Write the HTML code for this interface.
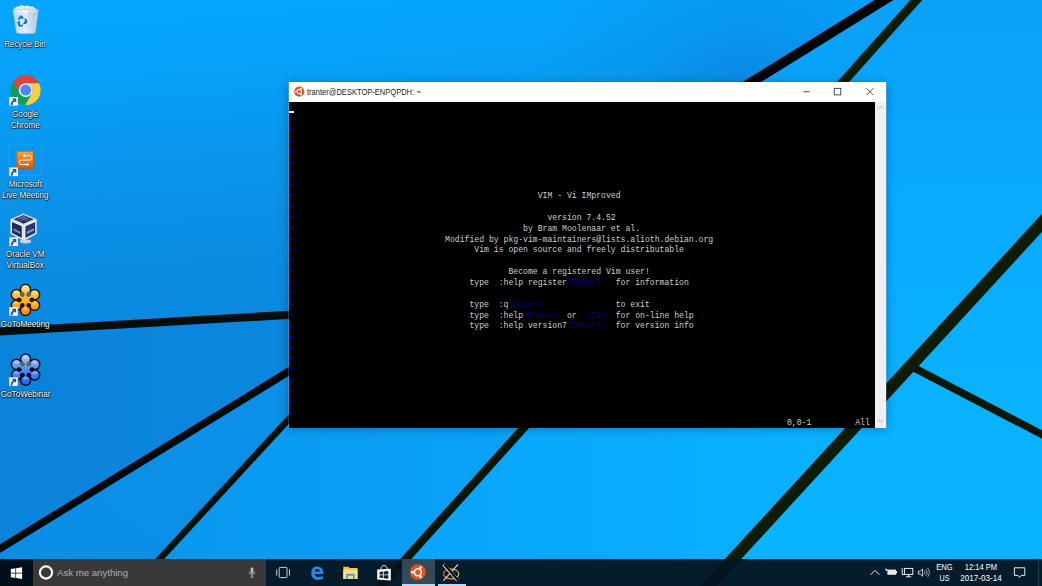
<!DOCTYPE html>
<html><head><meta charset="utf-8">
<title>Desktop</title>
<style>
html,body{margin:0;padding:0;}
body{width:1042px;height:586px;overflow:hidden;position:relative;background:#0a9cf0;font-family:"Liberation Sans",sans-serif;}
#wall{position:absolute;left:0;top:0;width:1042px;height:586px;}
.ico{position:absolute;width:60px;text-align:center;color:#fff;font-size:8.2px;line-height:10.4px;text-shadow:0 0 1px #000,0.5px 0.7px 1px rgba(0,0,0,.9),0 0 2px rgba(0,0,0,.6);white-space:nowrap;}
.ico span{display:block;}
.sc{position:absolute;width:8.5px;height:8.5px;background:#f4f6fa;}
#win{position:absolute;left:288px;top:82px;width:598.5px;height:345.5px;background:rgba(90,170,235,.3);box-shadow:0 1px 9px rgba(0,0,0,.28);}
#title{position:absolute;left:0.7px;top:0;width:597.3px;height:20px;background:#fff;}
#title .t{position:absolute;left:18.800px;top:5px;font-size:8.3px;line-height:11px;color:#1c1c1c;white-space:nowrap;transform-origin:0 50%;transform:scaleX(.908);}
#term{position:absolute;left:1px;top:20px;width:586px;height:325.5px;background:#000;overflow:hidden;}
#sb{position:absolute;left:587px;top:20px;width:11px;height:325.5px;background:#f0f0f0;}
pre{margin:0;position:absolute;left:0;top:2.3px;font-family:"Liberation Mono",monospace;font-size:8.14px;line-height:10.854px;color:#cecece;white-space:pre;}
.b{color:#0000ee;position:relative;top:.3px;}
.r{position:relative;top:-1.3px;left:.6px;}
.d{color:#000088;}
#tb{position:absolute;left:0;top:559px;width:1042px;height:27px;background:rgba(4,20,33,.95);}

#tb .start{position:absolute;left:0;top:0;width:32.5px;height:27px;background:rgba(2,8,16,.6);}
#tb .search{position:absolute;left:32.5px;top:0;width:233px;height:27px;background:#39393b;}
#tb .search .q{position:absolute;left:24.6px;top:8.2px;font-size:9.6px;line-height:12px;color:#adadad;white-space:nowrap;}
#tb svg{position:absolute;left:0;top:0;}
#tb .act{position:absolute;left:401.5px;top:0;width:33.2px;height:27px;background:rgba(168,182,190,.3);}
#tb .ul{position:absolute;top:25px;height:2px;background:#b2dbf7;}
.tray{position:absolute;color:#fff;font-size:8.2px;line-height:10px;white-space:nowrap;text-align:center;}
</style></head>
<body>
<svg id="wall" viewBox="0 0 1042 586">
<defs>
<linearGradient id="gA" gradientUnits="userSpaceOnUse" x1="0" y1="0" x2="25" y2="331"><stop offset="0" stop-color="#03a7fe"/><stop offset="0.25" stop-color="#06a1f8"/><stop offset="0.5" stop-color="#0a96ec"/><stop offset="0.75" stop-color="#0b8ee5"/><stop offset="1" stop-color="#0b89e0"/></linearGradient>
<radialGradient id="gA2" gradientUnits="userSpaceOnUse" cx="745" cy="100" r="210"><stop offset="0" stop-color="#0c78d8" stop-opacity=".55"/><stop offset="0.5" stop-color="#0c80dc" stop-opacity=".22"/><stop offset="1" stop-color="#0c80dc" stop-opacity="0"/></radialGradient>
<linearGradient id="gB" x1="0" y1="0" x2="1" y2="0"><stop offset="0" stop-color="#0a84da"/><stop offset="1" stop-color="#0b8ae0"/></linearGradient>
<linearGradient id="gC" x1="0" y1="1" x2="1" y2="0"><stop offset="0" stop-color="#0b8ee6"/><stop offset="1" stop-color="#0b90e8"/></linearGradient>
<linearGradient id="gD" gradientUnits="userSpaceOnUse" x1="160" y1="0" x2="520" y2="0"><stop offset="0" stop-color="#0a98f0"/><stop offset="1" stop-color="#0aa2f8"/></linearGradient>
<linearGradient id="gD2" gradientUnits="userSpaceOnUse" x1="400" y1="0" x2="850" y2="0"><stop offset="0" stop-color="#09a5fb"/><stop offset="1" stop-color="#0ab2ff"/></linearGradient>
<linearGradient id="gR" gradientUnits="userSpaceOnUse" x1="0" y1="0" x2="0" y2="586"><stop offset="0" stop-color="#0aa1f7"/><stop offset="0.3" stop-color="#0aa9fd"/><stop offset="0.6" stop-color="#0ab0ff"/><stop offset="1" stop-color="#09b6ff"/></linearGradient>
</defs>
<rect width="1042" height="586" fill="url(#gR)"/>
<polygon fill="url(#gA)" points="0,0 884,0 600,180 600,297 0,331"/>
<polygon fill="url(#gA2)" points="0,0 884,0 600,180 600,297 0,331"/>
<polygon fill="#0aa2f8" points="881,0 916,0 740,200 600,180"/>
<polygon fill="url(#gB)" points="0,330 600,297 450,273 0,545"/>
<polygon fill="url(#gC)" points="0,545 450,273 400,301 133,590 0,590"/>
<polygon fill="url(#gD)" points="133,590 400,301 640,301 378,590"/>
<polygon fill="url(#gD2)" points="378,590 640,301 900,380 705,590"/>
<polygon fill="url(#gR)" points="705,590 917,368 1042,438 1042,590"/>
<polygon fill="url(#gR)" points="917,368 1042,219 1042,438"/>
<polygon fill="#060e0a" points="-14.2,336.4 461.0,309.0 460.6,300.9 -14.6,328.3"/>
<polygon fill="#04090c" points="-12.5,560.7 434.4,286.4 430.5,280.0 -16.4,554.4"/>
<polygon fill="#06110a" points="122.4,604.4 394.6,309.3 389.8,304.9 117.6,599.9"/>
<polygon fill="#020508" points="894.4,-12.3 620.4,157.8 625.6,166.2 899.7,-3.9"/>
<polygon fill="#0d1c05" points="920.2,-11.1 768.4,159.0 775.0,165.0 926.8,-5.1"/>
<polygon fill="#0b1705" points="911.8,370.9 1050.2,442.9 1053.7,436.3 915.3,364.2"/>
<polygon fill="#0a1604" points="590.8,347.1 368.3,594.5 374.5,600.0 596.9,352.7"/>
<polygon fill="#0e1c05" points="1056.4,198.1 691.6,595.3 700.4,603.4 1065.4,206.4"/>
</svg>
<!--ICONS-->
<svg id="icons" width="60" height="410" viewBox="0 0 60 410" style="position:absolute;left:0;top:0">
<g>
<defs><linearGradient id="rb" x1="0" y1="0" x2="1" y2="0"><stop offset="0" stop-color="#d3dde8"/><stop offset="0.45" stop-color="#f3f6f9"/><stop offset="1" stop-color="#c2d0de"/></linearGradient></defs>
<path d="M14.200 8.600c2-2.400 4.400-1.800 5.600-2.800 1.800-1.200 3.600-.4 4.800.4 1.600-1.200 3.800-1 5 .2 2.400-.6 4.600.6 6.600 2.600l-2 3.200h-17.600z" fill="#eef0f3"/>
<path d="M20.600 6.400l2.200 2.600M25.800 6.600l-1.200 2.400M30.400 7l-1.600 2.200M17.400 7.800l1.800 1.400M33.600 8l-1.400 1.400" stroke="#b9c3cd" stroke-width="0.700" fill="none"/>
<path d="M12.900 9.400h25.400l-2.900 23.400c-3.200 1.200-15.600 1.200-18.800 0z" fill="url(#rb)" opacity=".92"/>
<path d="M29 11l4.500 3-1.500 5 2.500 4-2 6.500M30.500 12.500l-2 5.500 2.500 4.500-1.500 6M34.500 13l-1 7" stroke="#b4c0cc" stroke-width="0.600" fill="none" opacity=".8"/>
<path d="M15.500 12l1.500 5-.8 6 1.300 7" stroke="#c2ccd6" stroke-width="0.600" fill="none" opacity=".8"/>
<path d="M12.900 9.400h25.400l-2.900 23.400c-3.200 1.200-15.600 1.200-18.800 0z" fill="none" stroke="#9dbcd8" stroke-width="0.600" opacity=".9"/>
<path d="M16.600 32.800c3.200 1.200 15.600 1.200 18.800 0" fill="none" stroke="#c4b2a0" stroke-width="0.800"/>
<g fill="none" stroke="#1c6fd0" stroke-width="1.900"><path d="M18.600 19.600l1.900-3.100 2.100 1.200"/><path d="M25 18.600l1.600 3.100-1.900 1.300"/><path d="M22.900 25.600h-3.500l-.8-2.200"/></g>
<g fill="#1c6fd0"><path d="M21.800 14.900l2.200 3.500-3.700.3z"/><path d="M26.700 23.700l-3.800.8 1.300-3.400z"/><path d="M16.700 23.200l2.400-2.900 1.600 3.500z"/></g>
</g>
<path d="M25.70 83.20L39.02 83.20A15.00 15.00 0 0 0 13.07 82.02L19.72 93.55A6.90 6.90 0 0 1 25.70 83.20Z" fill="#db4437"/>
<path d="M31.68 93.55L25.02 105.08A15.00 15.00 0 0 0 39.02 83.20L25.70 83.20A6.90 6.90 0 0 1 31.68 93.55Z" fill="#ffcd40"/>
<path d="M19.72 93.55L13.07 82.02A15.00 15.00 0 0 0 25.02 105.08L31.68 93.55A6.90 6.90 0 0 1 19.72 93.55Z" fill="#0f9d58"/>
<circle cx="25.70" cy="90.10" r="6.90" fill="#f4f4f4"/>
<circle cx="25.70" cy="90.10" r="5.50" fill="#4a8af4"/>
<rect x="9.30" y="97.00" width="8.60" height="8.60" fill="#f2f5fa"/><path d="M12.00 98.50h4.200v4.200l-1.400-1.400c-1.600 1.100-2.300 2.300-2.300 3.900h-1.800c0-2.300 1-3.900 2.700-5.300z" fill="#204fa6"/>
<g>
<defs><linearGradient id="lm" x1="0" y1="0" x2="0" y2="1"><stop offset="0" stop-color="#f7a24a"/><stop offset="0.5" stop-color="#ee7d16"/><stop offset="1" stop-color="#d9600a"/></linearGradient></defs>
<rect x="8.800" y="144.100" width="32.700" height="31.600" fill="none" stroke="#fff" stroke-width="0.500" opacity=".16"/>
<rect x="16.600" y="151.100" width="17.500" height="17.500" rx="1.800" fill="url(#lm)"/>
<rect x="16.900" y="151.400" width="16.900" height="16.900" rx="1.600" fill="none" stroke="#c2560a" stroke-width="0.600"/>
<path d="M23.300 155.700h6.300a2.200 2.200 0 0 1 0 4.400h-8.100a2.200 2.200 0 0 0 0 4.400h7" fill="none" stroke="#fff" stroke-width="1" opacity=".95"/>
<path d="M25.200 153.900l-2.300 1.800 2.300 1.800zM26.700 162.700l2.300 1.800-2.300 1.800z" fill="#fff" stroke="none"/>
<path d="M33.600 152v16.100h-16.500" fill="none" stroke="#b54a06" stroke-width="1" opacity=".55"/>
</g>
<rect x="9.40" y="167.50" width="8.60" height="8.60" fill="#f2f5fa"/><path d="M12.10 169.00h4.200v4.200l-1.400-1.400c-1.600 1.100-2.300 2.300-2.300 3.900h-1.800c0-2.300 1-3.900 2.700-5.300z" fill="#204fa6"/>
<g>
<ellipse cx="25.600" cy="241.800" rx="6" ry="2" fill="#9ea9b8"/>
<ellipse cx="25.600" cy="241.100" rx="5.400" ry="1.600" fill="#d4dae4"/>
<path d="M23.600 213.700l13 5.600v14.400l-13 7-13-7v-14.400z" fill="#eef1f6"/>
<path d="M23.600 213.700l13 5.600v14.400l-13 7-13-7v-14.400z" fill="none" stroke="#aeb9ca" stroke-width="0.600"/>
<path d="M23.600 224.900v15.600M10.800 219.400l12.800 5.500 12.800-5.500" fill="none" stroke="#c6cedb" stroke-width="0.700"/>
<path d="M23.600 214.900l10.200 4.400-10.200 4.500-10.200-4.500z" fill="#1d2f5c"/>
<path d="M12 221.900l9.800 4.400v11.800l-9.800-5.200z" fill="#1b2c57"/>
<path d="M35.200 221.900l-9.800 4.400v11.800l9.800-5.200z" fill="#243a6e"/>
<path d="M18.500 217.100l10.200 4.400M28.700 217.100l-10.200 4.400M21 216l10.200 4.400M26.200 216l-10.200 4.400" stroke="#a9b8d6" stroke-width="0.500" fill="none" opacity=".85"/>
<path d="M13.400 228.300l7 3.400v2.300l-7-3.400z" fill="#8fa1c4" opacity=".8"/>
<path d="M33.800 228.300l-7 3.400v2.300l7-3.400z" fill="#a6b7d6" opacity=".8"/>
</g>
<rect x="9.40" y="237.40" width="8.60" height="8.60" fill="#f2f5fa"/><path d="M12.10 238.90h4.200v4.200l-1.400-1.400c-1.600 1.100-2.300 2.300-2.300 3.900h-1.800c0-2.300 1-3.900 2.700-5.300z" fill="#204fa6"/>
<defs><linearGradient id="fm" x1="0" y1="0" x2="0" y2="1"><stop offset="0" stop-color="#ffe27a"/><stop offset="0.55" stop-color="#ffb21e"/><stop offset="1" stop-color="#ff8a0e"/></linearGradient></defs>
<g fill="#241608"><circle cx="25.50" cy="289.40" r="5.80"/><path d="M25.50 299.90L25.50 289.40" stroke="#241608" stroke-width="5.4" stroke-linecap="round"/><circle cx="34.59" cy="294.65" r="5.80"/><path d="M25.50 299.90L34.59 294.65" stroke="#241608" stroke-width="5.4" stroke-linecap="round"/><circle cx="34.59" cy="305.15" r="5.80"/><path d="M25.50 299.90L34.59 305.15" stroke="#241608" stroke-width="5.4" stroke-linecap="round"/><circle cx="25.50" cy="310.40" r="5.80"/><path d="M25.50 299.90L25.50 310.40" stroke="#241608" stroke-width="5.4" stroke-linecap="round"/><circle cx="16.41" cy="305.15" r="5.80"/><path d="M25.50 299.90L16.41 305.15" stroke="#241608" stroke-width="5.4" stroke-linecap="round"/><circle cx="16.41" cy="294.65" r="5.80"/><path d="M25.50 299.90L16.41 294.65" stroke="#241608" stroke-width="5.4" stroke-linecap="round"/><circle cx="25.50" cy="299.90" r="5.6"/></g>
<defs><linearGradient id="fmu" gradientUnits="userSpaceOnUse" x1="0" y1="284.9" x2="0" y2="314.9"><stop offset="0" stop-color="#ffe27a"/><stop offset="0.5" stop-color="#ffb21e"/><stop offset="1" stop-color="#ff8a0e"/></linearGradient></defs>
<g fill="url(#fmu)"><circle cx="25.50" cy="289.40" r="4.30"/><path d="M25.50 299.90L25.50 289.40" stroke="url(#fmu)" stroke-width="2.6" stroke-linecap="round"/><circle cx="34.59" cy="294.65" r="4.30"/><path d="M25.50 299.90L34.59 294.65" stroke="url(#fmu)" stroke-width="2.6" stroke-linecap="round"/><circle cx="34.59" cy="305.15" r="4.30"/><path d="M25.50 299.90L34.59 305.15" stroke="url(#fmu)" stroke-width="2.6" stroke-linecap="round"/><circle cx="25.50" cy="310.40" r="4.30"/><path d="M25.50 299.90L25.50 310.40" stroke="url(#fmu)" stroke-width="2.6" stroke-linecap="round"/><circle cx="16.41" cy="305.15" r="4.30"/><path d="M25.50 299.90L16.41 305.15" stroke="url(#fmu)" stroke-width="2.6" stroke-linecap="round"/><circle cx="16.41" cy="294.65" r="4.30"/><path d="M25.50 299.90L16.41 294.65" stroke="url(#fmu)" stroke-width="2.6" stroke-linecap="round"/><circle cx="25.50" cy="299.90" r="4.0"/></g>
<circle cx="22.25" cy="294.27" r="2.4" fill="#6a6a6a" opacity=".9"/>
<circle cx="28.75" cy="294.27" r="2.4" fill="#6a6a6a" opacity=".9"/>
<circle cx="22.25" cy="305.53" r="2.3" fill="#241608"/>
<circle cx="28.75" cy="305.53" r="2.3" fill="#241608"/>
<circle cx="32.00" cy="299.90" r="2.3" fill="#241608"/>
<circle cx="19.00" cy="299.90" r="2.3" fill="#241608"/>
<ellipse cx="25.50" cy="287.40" rx="2.8" ry="1.6" fill="#fff" opacity=".28"/>
<ellipse cx="34.59" cy="292.65" rx="2.8" ry="1.6" fill="#fff" opacity=".28"/>
<ellipse cx="34.59" cy="303.15" rx="2.8" ry="1.6" fill="#fff" opacity=".28"/>
<ellipse cx="25.50" cy="308.40" rx="2.8" ry="1.6" fill="#fff" opacity=".28"/>
<ellipse cx="16.41" cy="303.15" rx="2.8" ry="1.6" fill="#fff" opacity=".28"/>
<ellipse cx="16.41" cy="292.65" rx="2.8" ry="1.6" fill="#fff" opacity=".28"/>
<rect x="9.20" y="307.20" width="8.60" height="8.60" fill="#f2f5fa"/><path d="M11.90 308.70h4.200v4.200l-1.400-1.400c-1.600 1.100-2.300 2.300-2.300 3.900h-1.800c0-2.300 1-3.900 2.700-5.300z" fill="#204fa6"/>
<defs><linearGradient id="fw" x1="0" y1="0" x2="0" y2="1"><stop offset="0" stop-color="#a9ccff"/><stop offset="0.55" stop-color="#4d8dff"/><stop offset="1" stop-color="#1f63f2"/></linearGradient></defs>
<g fill="#0a0e1a"><circle cx="25.60" cy="359.10" r="5.80"/><path d="M25.60 369.60L25.60 359.10" stroke="#0a0e1a" stroke-width="5.4" stroke-linecap="round"/><circle cx="34.69" cy="364.35" r="5.80"/><path d="M25.60 369.60L34.69 364.35" stroke="#0a0e1a" stroke-width="5.4" stroke-linecap="round"/><circle cx="34.69" cy="374.85" r="5.80"/><path d="M25.60 369.60L34.69 374.85" stroke="#0a0e1a" stroke-width="5.4" stroke-linecap="round"/><circle cx="25.60" cy="380.10" r="5.80"/><path d="M25.60 369.60L25.60 380.10" stroke="#0a0e1a" stroke-width="5.4" stroke-linecap="round"/><circle cx="16.51" cy="374.85" r="5.80"/><path d="M25.60 369.60L16.51 374.85" stroke="#0a0e1a" stroke-width="5.4" stroke-linecap="round"/><circle cx="16.51" cy="364.35" r="5.80"/><path d="M25.60 369.60L16.51 364.35" stroke="#0a0e1a" stroke-width="5.4" stroke-linecap="round"/><circle cx="25.60" cy="369.60" r="5.6"/></g>
<defs><linearGradient id="fwu" gradientUnits="userSpaceOnUse" x1="0" y1="354.6" x2="0" y2="384.6"><stop offset="0" stop-color="#a9ccff"/><stop offset="0.5" stop-color="#4d8dff"/><stop offset="1" stop-color="#1f63f2"/></linearGradient></defs>
<g fill="url(#fwu)"><circle cx="25.60" cy="359.10" r="4.30"/><path d="M25.60 369.60L25.60 359.10" stroke="url(#fwu)" stroke-width="2.6" stroke-linecap="round"/><circle cx="34.69" cy="364.35" r="4.30"/><path d="M25.60 369.60L34.69 364.35" stroke="url(#fwu)" stroke-width="2.6" stroke-linecap="round"/><circle cx="34.69" cy="374.85" r="4.30"/><path d="M25.60 369.60L34.69 374.85" stroke="url(#fwu)" stroke-width="2.6" stroke-linecap="round"/><circle cx="25.60" cy="380.10" r="4.30"/><path d="M25.60 369.60L25.60 380.10" stroke="url(#fwu)" stroke-width="2.6" stroke-linecap="round"/><circle cx="16.51" cy="374.85" r="4.30"/><path d="M25.60 369.60L16.51 374.85" stroke="url(#fwu)" stroke-width="2.6" stroke-linecap="round"/><circle cx="16.51" cy="364.35" r="4.30"/><path d="M25.60 369.60L16.51 364.35" stroke="url(#fwu)" stroke-width="2.6" stroke-linecap="round"/><circle cx="25.60" cy="369.60" r="4.0"/></g>
<circle cx="22.35" cy="363.97" r="2.4" fill="#6a6a6a" opacity=".9"/>
<circle cx="28.85" cy="363.97" r="2.4" fill="#6a6a6a" opacity=".9"/>
<circle cx="22.35" cy="375.23" r="2.3" fill="#0a0e1a"/>
<circle cx="28.85" cy="375.23" r="2.3" fill="#0a0e1a"/>
<circle cx="32.10" cy="369.60" r="2.3" fill="#0a0e1a"/>
<circle cx="19.10" cy="369.60" r="2.3" fill="#0a0e1a"/>
<ellipse cx="25.60" cy="357.10" rx="2.8" ry="1.6" fill="#fff" opacity=".28"/>
<ellipse cx="34.69" cy="362.35" rx="2.8" ry="1.6" fill="#fff" opacity=".28"/>
<ellipse cx="34.69" cy="372.85" rx="2.8" ry="1.6" fill="#fff" opacity=".28"/>
<ellipse cx="25.60" cy="378.10" rx="2.8" ry="1.6" fill="#fff" opacity=".28"/>
<ellipse cx="16.51" cy="372.85" rx="2.8" ry="1.6" fill="#fff" opacity=".28"/>
<ellipse cx="16.51" cy="362.35" rx="2.8" ry="1.6" fill="#fff" opacity=".28"/>
<rect x="9.20" y="377.30" width="8.60" height="8.60" fill="#f2f5fa"/><path d="M11.90 378.80h4.200v4.200l-1.400-1.400c-1.600 1.100-2.300 2.300-2.300 3.900h-1.800c0-2.300 1-3.900 2.700-5.300z" fill="#204fa6"/>
</svg>
<div class="ico" style="left:-4.7px;top:39.8px;transform:scaleX(0.95)"><span>Recycle Bin</span></div>
<div class="ico" style="left:-4.8px;top:110.3px;transform:scaleX(1.0)"><span>Google</span><span>Chrome</span></div>
<div class="ico" style="left:-4.7px;top:180.4px;transform:scaleX(1.0)"><span>Microsoft</span><span>Live Meeting</span></div>
<div class="ico" style="left:-4.8px;top:250.4px;transform:scaleX(1.0)"><span>Oracle VM</span><span>VirtualBox</span></div>
<div class="ico" style="left:-4.8px;top:319.5px;transform:scaleX(1.0)"><span>GoToMeeting</span></div>
<div class="ico" style="left:-4.4px;top:389.9px;transform:scaleX(1.0)"><span>GoToWebinar</span></div>
<!--/ICONS-->
<div id="win">
 <div id="title">
  <svg width="598" height="20" viewBox="0 0 598 20" style="position:absolute;left:0;top:0">
   <circle cx="10.3" cy="9.6" r="5.1" fill="#e2521e"/>
   <circle cx="10.3" cy="9.6" r="2.2" fill="none" stroke="#fff" stroke-width="1.1"/>
   <circle cx="6.9" cy="9.6" r="0.9" fill="#fff"/><circle cx="12" cy="6.7" r="0.9" fill="#fff"/><circle cx="12" cy="12.5" r="0.9" fill="#fff"/>
   <path d="M514.4 9.700h6.300" stroke="#222" stroke-width="0.8" fill="none"/>
   <rect x="545.2" y="6.300" width="6.600" height="6.600" fill="none" stroke="#222" stroke-width="0.8"/>
   <path d="M577.5 6.300l6.800 6.800M584.300 6.300l-6.800 6.800" stroke="#222" stroke-width="0.8" fill="none"/>
  </svg>
  <div class="t">tranter@DESKTOP-ENPQPDH: ~</div>
 </div>
 <div id="term"><div style="position:absolute;left:0;top:8.7px;width:4.900px;height:2.200px;background:#f2f2f2"></div><pre id="scr">

<span class="b">~</span>
<span class="b">~</span>
<span class="b">~</span>
<span class="b">~</span>
<span class="b">~</span>
<span class="b">~</span>
<span class="b">~</span>
<span class="b">~</span>                                                  VIM - Vi IMproved
<span class="b">~</span>
<span class="b">~</span>                                                    version 7.4.52
<span class="b">~</span>                                               by Bram Moolenaar et al.
<span class="b">~</span>                               Modified by pkg-vim-maintainers@lists.alioth.debian.org
<span class="b">~</span>                                     Vim is open source and freely distributable
<span class="b">~</span>
<span class="b">~</span>                                            Become a registered Vim user!
<span class="b">~</span>                                    type  :help register<span class="d">&lt;Enter&gt;</span>   for information
<span class="b">~</span>
<span class="b">~</span>                                    type  :q<span class="d">&lt;Enter&gt;</span>               to exit
<span class="b">~</span>                                    type  :help<span class="d">&lt;Enter&gt;</span>  or  <span class="d">&lt;F1&gt;</span>  for on-line help
<span class="b">~</span>                                    type  :help version7<span class="d">&lt;Enter&gt;</span>   for version info
<span class="b">~</span>
<span class="b">~</span>
<span class="b">~</span>
<span class="b">~</span>
<span class="b">~</span>
<span class="b">~</span>
<span class="b">~</span>
<span class="b">~</span>
                                                                                                      <span class="r">0,0-1         All</span></pre></div>
 <div id="sb"><svg width="11" height="325" viewBox="-1 0 11 325" style="position:absolute;left:0;top:0">
  <path d="M2 6.6l2.6-2.6 2.6 2.6" stroke="#9a9a9a" stroke-width="0.8" fill="none"/>
  <path d="M2 317.6l2.6 2.6 2.6-2.6" stroke="#9a9a9a" stroke-width="0.8" fill="none"/>
 </svg></div>
</div>
<div id="tb">
 <div class="start"></div>
 <div class="search"><div class="q">Ask me anything</div></div>
 <div class="act"></div>
 <div class="ul" style="left:401.5px;width:33.2px"></div>
 <div class="ul" style="left:438px;width:27.800px"></div>
 <svg width="1042" height="27" viewBox="0 0 1042 27">
  <!-- start logo -->
  <g fill="#fff"><path d="M10.8 9.9l4.6-.65v4.5h-4.6zM16.1 9.15l6-.85v5.45h-6zM10.8 14.45h4.6v4.5l-4.6-.65zM16.1 14.45h6v5.45l-6-.85z"/></g>
  <!-- cortana -->
  <circle cx="46" cy="13.500" r="6.100" fill="none" stroke="#fff" stroke-width="2.200"/>
  <!-- mic -->
  <g stroke="#bdbdbd" fill="none" stroke-width="0.8"><rect x="250.6" y="8.6" width="2.8" height="6" rx="1.4" fill="#bdbdbd" stroke="none"/><path d="M249.2 13c0 3.6 5.6 3.6 5.6 0M252 15.8v2.2M250.4 18.2h3.2"/></g>
  <!-- task view -->
  <g stroke="#e4e4e4" fill="none" stroke-width="0.9"><rect x="279.2" y="8.4" width="7.8" height="10.2" rx="1"/><path d="M276.700 10.300v6.400M289.500 10.300v6.400"/></g>
  <!-- edge -->
  <g><path d="M310.6 13.6c.3-3.6 3-6.2 6.5-6.2 3.9 0 6.1 2.8 6.1 6.3v1.3h-8.6c.2 2 1.8 3.1 4 3.1 1.6 0 3-.4 4.2-1.1v2.8c-1.3.7-2.9 1-4.7 1-4.2 0-6.9-2.6-6.9-6.4 0-2 .9-3.7 2.3-4.9-1.500 1-2.600 2.500-2.900 4.100zM314.700 12.600h5.100c0-1.600-1-2.600-2.500-2.600-1.400 0-2.400 1-2.600 2.600z" fill="#1e8fe6"/></g>
  <!-- explorer -->
  <g><path d="M343.300 7.800h5.200l1.100 1.300h7.900v10.900h-14.200z" fill="#f2c443"/><path d="M343.300 10.600h14.200v9.400h-14.200z" fill="#fbdf86"/><path d="M346.200 14.800h8.400v5.200h-8.400z" fill="#3a9ae4"/><path d="M347.800 16.700h5.200v3.300h-5.200z" fill="#fbdf86"/></g>
  <!-- store -->
  <g><path d="M377.200 10.600l13.600-.8v11.600l-13.600-.9z" fill="#fff"/><path d="M380.800 10.200c0-4.600 6.200-5 6.400-.2" fill="none" stroke="#fff" stroke-width="0.900"/><path d="M379.600 12.900l3.300-.4v2.900h-3.300zM383.700 12.400l4.600-.5v3.500h-4.600zM379.600 16.200h3.300v2.900l-3.300-.3zM383.700 16.200h4.600v3.500l-4.600-.5z" fill="#0b2233"/></g>
  <!-- ubuntu -->
  <g><circle cx="417.900" cy="13.200" r="7.900" fill="#e2521e"/><circle cx="417.900" cy="13.200" r="3.500" fill="none" stroke="#fff" stroke-width="1.600"/><circle cx="412.600" cy="13.200" r="1.400" fill="#fff"/><circle cx="420.550" cy="8.600" r="1.400" fill="#fff"/><circle cx="420.550" cy="17.800" r="1.400" fill="#fff"/></g>
  <!-- xming -->
  <defs><linearGradient id="xg" x1="0" y1="0" x2="1" y2="0"><stop offset="0" stop-color="#f4561a"/><stop offset="0.5" stop-color="#e88a28"/><stop offset="1" stop-color="#d2a83c"/></linearGradient></defs>
  <g fill="none"><ellipse cx="451.100" cy="14.900" rx="7.700" ry="4.900" stroke="url(#xg)" stroke-width="1.300"/><path d="M458 5.300l-14.600 16.300" stroke="#dcdcdc" stroke-width="1.100"/><path d="M443.700 5.300l14 16.100" stroke="#e6e6e6" stroke-width="3.300"/><path d="M444.300 5.300l13.800 16.100" stroke="#060606" stroke-width="2.300"/></g>
  <!-- tray chevron -->
  <path d="M870.600 15.800l4.400-4.400 4.400 4.400" stroke="#fff" stroke-width="0.9" fill="none"/>
  <!-- drive/battery -->
  <g><path d="M887.400 10.600h8.600v5.200h-8.600z" fill="#e8e8e8"/><path d="M885.400 9.600l2 1v1.600l-2-.6zM896 12h1v2.400h-1z" fill="#e8e8e8"/></g>
  <!-- network -->
  <g stroke="#fff" fill="none" stroke-width="0.9"><rect x="904.400" y="9.400" width="8.400" height="6"/><path d="M908.600 15.400v2.200M906 17.800h5.200M902.200 9v6.600h2"/></g>
  <!-- volume -->
  <g stroke="#fff" fill="none" stroke-width="0.800"><path d="M918.400 12.200h1.800l2.400-2.200v7.200l-2.400-2.200h-1.800z"/><path d="M924.200 11.800c1 1 1 2.600 0 3.600M925.800 10.400c1.800 1.800 1.800 4.600 0 6.400M927.400 9c2.600 2.600 2.600 6.600 0 9.200" stroke-width="0.600"/></g>
  <!-- notification -->
  <path d="M1014.400 8.800h10.400v7.600h-3.600l-1.600 2-1.600-2h-3.600z" stroke="#fff" stroke-width="0.900" fill="none"/>
  <path d="M1038.700 0v27" stroke="#4a5a66" stroke-width="0.600"/>
 </svg>
 <div class="tray" style="left:934px;top:4.300px;width:21px;transform:scaleX(.92)">ENG</div>
 <div class="tray" style="left:933.600px;top:15.400px;width:21px;transform:scaleX(.87)">US</div>
 <div class="tray" style="left:956px;top:4.300px;width:50px;transform:scaleX(.92)">12:14 PM</div>
 <div class="tray" style="left:956.300px;top:15.400px;width:50px;transform:scaleX(.985)">2017-03-14</div>
</div>
</body></html>
